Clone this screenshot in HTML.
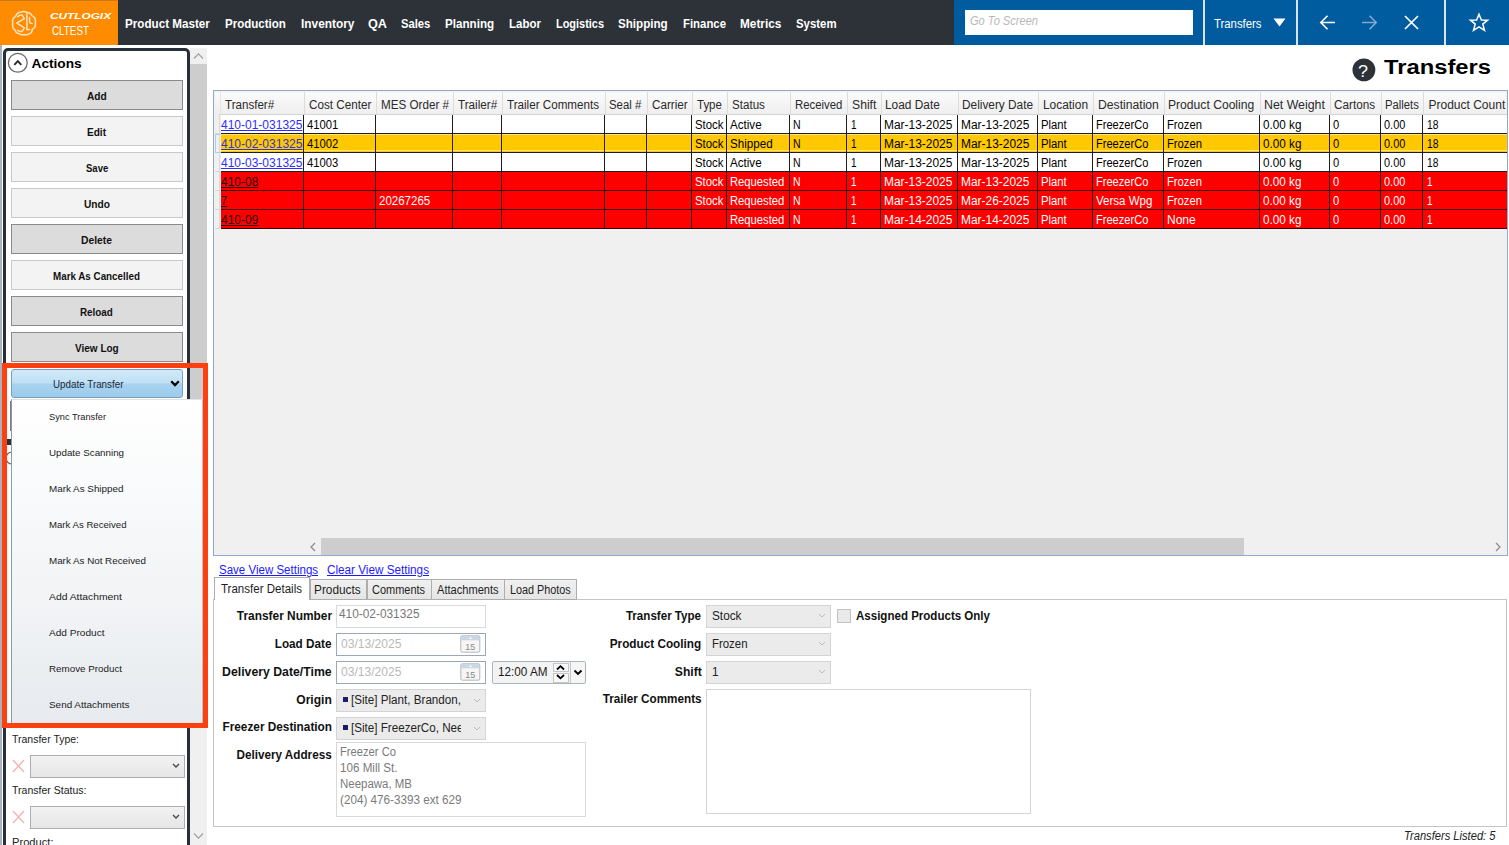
<!DOCTYPE html><html><head><meta charset="utf-8"><title>Transfers</title><style>
*{margin:0;padding:0;box-sizing:border-box}
html,body{width:1509px;height:845px;overflow:hidden;background:#fff;font-family:"Liberation Sans",sans-serif}
.t{position:absolute;white-space:pre;line-height:normal}
.r{position:absolute}
svg{position:absolute;overflow:visible}
</style></head><body>
<div class="r" style="left:0px;top:0px;width:1509px;height:45px;background:#2c3238"></div>
<div class="r" style="left:0px;top:0px;width:118px;height:45px;background:#fe8b00"></div>
<div class="r" style="left:0px;top:0px;width:117px;height:1px;background:#c77a1c"></div>
<div class="r" style="left:954px;top:0px;width:555px;height:45px;background:#005c9f"></div>
<svg style="left:0px;top:0px" width="40" height="40" viewBox="0 0 40 40">
<g fill="none" stroke="#fde2bd" stroke-width="1.5" stroke-linejoin="round" stroke-linecap="round">
<path d="M21.1 12 Q24 10.8 26.9 12.3 Q30.6 12.8 32.2 15.9 Q35.6 17.6 35.4 20.6 L35.4 25.5 Q35.2 28 32.3 29.2 Q32.2 32.5 29.8 33.5 Q27.5 35.4 24.2 34.6 Q21 35.4 18.6 33.4 Q15.6 33 15.4 30.5 Q12.6 28.8 12.6 25.8 L12.6 20.6 Q12.8 17.8 15.5 16.6 Q16.6 12.6 21.1 12 Z"/>
<path d="M17.6 16.8 Q19.5 14.6 22 15 L24.4 18.6 L16.8 23 L24.4 27.8 L22.2 31.4 Q19.6 32 17.6 30.2"/>
<path d="M26.9 13.2 L26.9 29.8 L29.6 29.4"/>
<path d="M29.4 17.4 L29.8 22.8 L32.2 23.6"/>
</g></svg>
<div class="t" style="left:49.5px;top:9.8px;font-size:9.5px;color:#fff;font-weight:bold;font-style:italic;transform:scaleX(1.243);transform-origin:left;">CUTLOGIX</div>
<div class="t" style="left:52.3px;top:24.0px;font-size:12.5px;color:#fff;transform:scaleX(0.787);transform-origin:left;">CLTEST</div>
<div class="t" style="left:124.9px;top:16.8px;font-size:12.5px;color:#fff;font-weight:bold;transform:scaleX(0.932);transform-origin:left;">Product Master</div>
<div class="t" style="left:224.7px;top:16.8px;font-size:12.5px;color:#fff;font-weight:bold;transform:scaleX(0.923);transform-origin:left;">Production</div>
<div class="t" style="left:300.6px;top:16.8px;font-size:12.5px;color:#fff;font-weight:bold;transform:scaleX(0.949);transform-origin:left;">Inventory</div>
<div class="t" style="left:368.3px;top:16.8px;font-size:12.5px;color:#fff;font-weight:bold;transform:scaleX(1.013);transform-origin:left;">QA</div>
<div class="t" style="left:401.4px;top:16.8px;font-size:12.5px;color:#fff;font-weight:bold;transform:scaleX(0.897);transform-origin:left;">Sales</div>
<div class="t" style="left:445.0px;top:16.8px;font-size:12.5px;color:#fff;font-weight:bold;transform:scaleX(0.930);transform-origin:left;">Planning</div>
<div class="t" style="left:508.6px;top:16.8px;font-size:12.5px;color:#fff;font-weight:bold;transform:scaleX(0.919);transform-origin:left;">Labor</div>
<div class="t" style="left:556.0px;top:16.8px;font-size:12.5px;color:#fff;font-weight:bold;transform:scaleX(0.875);transform-origin:left;">Logistics</div>
<div class="t" style="left:618.2px;top:16.8px;font-size:12.5px;color:#fff;font-weight:bold;transform:scaleX(0.930);transform-origin:left;">Shipping</div>
<div class="t" style="left:682.9px;top:16.8px;font-size:12.5px;color:#fff;font-weight:bold;transform:scaleX(0.910);transform-origin:left;">Finance</div>
<div class="t" style="left:740.4px;top:16.8px;font-size:12.5px;color:#fff;font-weight:bold;transform:scaleX(0.944);transform-origin:left;">Metrics</div>
<div class="t" style="left:796.4px;top:16.8px;font-size:12.5px;color:#fff;font-weight:bold;transform:scaleX(0.911);transform-origin:left;">System</div>
<div class="r" style="left:965px;top:10px;width:228px;height:25px;background:#fff"></div>
<div class="t" style="left:969.5px;top:14.0px;font-size:12px;color:#b8b8b8;font-style:italic;transform:scaleX(0.924);transform-origin:left;">Go To Screen</div>
<div class="r" style="left:1203px;top:0px;width:2px;height:45px;background:#d7e4ef"></div>
<div class="r" style="left:1296px;top:0px;width:2px;height:45px;background:#d7e4ef"></div>
<div class="r" style="left:1444px;top:0px;width:2px;height:45px;background:#d7e4ef"></div>
<div class="t" style="left:1213.5px;top:16.0px;font-size:13px;color:#fff;transform:scaleX(0.873);transform-origin:left;">Transfers</div>
<svg style="left:1273px;top:18px" width="13" height="9"><path d="M0.5 0.5 L12.5 0.5 L6.5 8.5 Z" fill="#fff"/></svg>
<svg style="left:1319px;top:14px" width="18" height="17"><path d="M16 8.5 L2 8.5 M8.5 1.8 L1.8 8.5 L8.5 15.2" fill="none" stroke="#fff" stroke-width="1.6"/></svg>
<svg style="left:1361px;top:14px" width="18" height="17"><path d="M1 8.5 L15 8.5 M8.5 1.8 L15.2 8.5 L8.5 15.2" fill="none" stroke="#80a9cf" stroke-width="1.6"/></svg>
<svg style="left:1404px;top:15px" width="15" height="15"><path d="M1 1 L14 14 M14 1 L1 14" fill="none" stroke="#fff" stroke-width="1.7"/></svg>
<svg style="left:1469px;top:13px" width="20" height="19" viewBox="0 0 20 19"><path d="M10 1.2 L12.4 7 L18.6 7.2 L13.8 11.1 L15.5 17.4 L10 13.8 L4.5 17.4 L6.2 11.1 L1.4 7.2 L7.6 7 Z" fill="none" stroke="#fff" stroke-width="1.5" stroke-linejoin="miter"/></svg>
<svg style="left:1352px;top:58px" width="24" height="24"><circle cx="11.9" cy="11.9" r="11.4" fill="#2c3238"/></svg>
<div class="t" style="left:1358.2px;top:61.8px;font-size:17px;color:#fff;transform:scaleX(1.058);transform-origin:left;">?</div>
<div class="t" style="left:1384.3px;top:56.1px;font-size:20px;color:#000;font-weight:bold;transform:scaleX(1.188);transform-origin:left;">Transfers</div>
<div class="r" style="left:213px;top:90px;width:1294.5px;height:466px;background:#f0f0f0;border:1.5px solid #93abcb"></div>
<div class="r" style="left:214.5px;top:91.5px;width:1291px;height:23px;background:linear-gradient(#fbfbfb,#eeeeee)"></div>
<div class="r" style="left:304px;top:91.5px;width:1px;height:23px;background:#dcdcdc"></div>
<div class="r" style="left:376px;top:91.5px;width:1px;height:23px;background:#dcdcdc"></div>
<div class="r" style="left:453px;top:91.5px;width:1px;height:23px;background:#dcdcdc"></div>
<div class="r" style="left:502px;top:91.5px;width:1px;height:23px;background:#dcdcdc"></div>
<div class="r" style="left:605px;top:91.5px;width:1px;height:23px;background:#dcdcdc"></div>
<div class="r" style="left:647px;top:91.5px;width:1px;height:23px;background:#dcdcdc"></div>
<div class="r" style="left:692px;top:91.5px;width:1px;height:23px;background:#dcdcdc"></div>
<div class="r" style="left:727px;top:91.5px;width:1px;height:23px;background:#dcdcdc"></div>
<div class="r" style="left:790px;top:91.5px;width:1px;height:23px;background:#dcdcdc"></div>
<div class="r" style="left:847px;top:91.5px;width:1px;height:23px;background:#dcdcdc"></div>
<div class="r" style="left:881px;top:91.5px;width:1px;height:23px;background:#dcdcdc"></div>
<div class="r" style="left:958px;top:91.5px;width:1px;height:23px;background:#dcdcdc"></div>
<div class="r" style="left:1038px;top:91.5px;width:1px;height:23px;background:#dcdcdc"></div>
<div class="r" style="left:1093px;top:91.5px;width:1px;height:23px;background:#dcdcdc"></div>
<div class="r" style="left:1164px;top:91.5px;width:1px;height:23px;background:#dcdcdc"></div>
<div class="r" style="left:1260px;top:91.5px;width:1px;height:23px;background:#dcdcdc"></div>
<div class="r" style="left:1330px;top:91.5px;width:1px;height:23px;background:#dcdcdc"></div>
<div class="r" style="left:1381px;top:91.5px;width:1px;height:23px;background:#dcdcdc"></div>
<div class="r" style="left:1423px;top:91.5px;width:1px;height:23px;background:#dcdcdc"></div>
<div class="r" style="left:220px;top:91.5px;width:1px;height:23px;background:#e4e4e4"></div>
<div class="t" style="left:225.2px;top:97.8px;font-size:12px;color:#2a2a2a;transform:scaleX(0.966);transform-origin:left;">Transfer#</div>
<div class="t" style="left:308.5px;top:97.8px;font-size:12px;color:#2a2a2a;transform:scaleX(0.973);transform-origin:left;">Cost Center</div>
<div class="t" style="left:380.8px;top:97.8px;font-size:12px;color:#2a2a2a;transform:scaleX(0.971);transform-origin:left;">MES Order #</div>
<div class="t" style="left:458.3px;top:97.8px;font-size:12px;color:#2a2a2a;transform:scaleX(0.974);transform-origin:left;">Trailer#</div>
<div class="t" style="left:507.4px;top:97.8px;font-size:12px;color:#2a2a2a;transform:scaleX(0.970);transform-origin:left;">Trailer Comments</div>
<div class="t" style="left:609.1px;top:97.8px;font-size:12px;color:#2a2a2a;transform:scaleX(0.949);transform-origin:left;">Seal #</div>
<div class="t" style="left:651.5px;top:97.8px;font-size:12px;color:#2a2a2a;transform:scaleX(0.971);transform-origin:left;">Carrier</div>
<div class="t" style="left:697.0px;top:97.8px;font-size:12px;color:#2a2a2a;transform:scaleX(0.957);transform-origin:left;">Type</div>
<div class="t" style="left:731.8px;top:97.8px;font-size:12px;color:#2a2a2a;transform:scaleX(0.967);transform-origin:left;">Status</div>
<div class="t" style="left:794.8px;top:97.8px;font-size:12px;color:#2a2a2a;transform:scaleX(0.945);transform-origin:left;">Received</div>
<div class="t" style="left:851.6px;top:97.8px;font-size:12px;color:#2a2a2a;transform:scaleX(1.016);transform-origin:left;">Shift</div>
<div class="t" style="left:885.3px;top:97.8px;font-size:12px;color:#2a2a2a;transform:scaleX(0.990);transform-origin:left;">Load Date</div>
<div class="t" style="left:962.1px;top:97.8px;font-size:12px;color:#2a2a2a;transform:scaleX(0.986);transform-origin:left;">Delivery Date</div>
<div class="t" style="left:1042.6px;top:97.8px;font-size:12px;color:#2a2a2a;transform:scaleX(0.992);transform-origin:left;">Location</div>
<div class="t" style="left:1097.8px;top:97.8px;font-size:12px;color:#2a2a2a;transform:scaleX(1.014);transform-origin:left;">Destination</div>
<div class="t" style="left:1168.3px;top:97.8px;font-size:12px;color:#2a2a2a;transform:scaleX(1.010);transform-origin:left;">Product Cooling</div>
<div class="t" style="left:1264.1px;top:97.8px;font-size:12px;color:#2a2a2a;transform:scaleX(1.030);transform-origin:left;">Net Weight</div>
<div class="t" style="left:1334.3px;top:97.8px;font-size:12px;color:#2a2a2a;transform:scaleX(0.978);transform-origin:left;">Cartons</div>
<div class="t" style="left:1385.0px;top:97.8px;font-size:12px;color:#2a2a2a;transform:scaleX(0.941);transform-origin:left;">Pallets</div>
<div class="t" style="left:1428.5px;top:97.8px;font-size:12px;color:#2a2a2a;">Product Count</div>
<div class="r" style="left:220.5px;top:114px;width:1286px;height:19px;background:#ffffff"></div>
<div class="t" style="left:221.0px;top:118.3px;font-size:12px;color:#2d2dff;text-decoration:underline;">410-01-031325</div>
<div class="t" style="left:307.0px;top:118.3px;font-size:12px;color:#000000;transform:scaleX(0.938);transform-origin:left;">41001</div>
<div class="t" style="left:695.0px;top:118.3px;font-size:12px;color:#000000;transform:scaleX(0.946);transform-origin:left;">Stock</div>
<div class="t" style="left:730.0px;top:118.3px;font-size:12px;color:#000000;transform:scaleX(0.967);transform-origin:left;">Active</div>
<div class="t" style="left:793.0px;top:118.3px;font-size:12px;color:#000000;transform:scaleX(0.877);transform-origin:left;">N</div>
<div class="t" style="left:851.2px;top:118.3px;font-size:12px;color:#000000;transform:scaleX(0.825);transform-origin:left;">1</div>
<div class="t" style="left:884.0px;top:118.3px;font-size:12px;color:#000000;transform:scaleX(0.994);transform-origin:left;">Mar-13-2025</div>
<div class="t" style="left:961.0px;top:118.3px;font-size:12px;color:#000000;transform:scaleX(0.994);transform-origin:left;">Mar-13-2025</div>
<div class="t" style="left:1041.0px;top:118.3px;font-size:12px;color:#000000;transform:scaleX(0.940);transform-origin:left;">Plant</div>
<div class="t" style="left:1096.0px;top:118.3px;font-size:12px;color:#000000;transform:scaleX(0.923);transform-origin:left;">FreezerCo</div>
<div class="t" style="left:1167.0px;top:118.3px;font-size:12px;color:#000000;transform:scaleX(0.937);transform-origin:left;">Frozen</div>
<div class="t" style="left:1263.0px;top:118.3px;font-size:12px;color:#000000;transform:scaleX(0.976);transform-origin:left;">0.00 kg</div>
<div class="t" style="left:1333.0px;top:118.3px;font-size:12px;color:#000000;transform:scaleX(0.930);transform-origin:left;">0</div>
<div class="t" style="left:1384.0px;top:118.3px;font-size:12px;color:#000000;transform:scaleX(0.912);transform-origin:left;">0.00</div>
<div class="t" style="left:1427.2px;top:118.3px;font-size:12px;color:#000000;transform:scaleX(0.854);transform-origin:left;">18</div>
<div class="r" style="left:220.5px;top:133px;width:1286px;height:19px;background:#ffc800"></div>
<div class="r" style="left:220.5px;top:134px;width:1286px;height:17px;border-top:1px solid #ffe38a;border-bottom:1px solid #ffe38a"></div>
<div class="t" style="left:221.0px;top:137.3px;font-size:12px;color:#3434c8;text-decoration:underline;">410-02-031325</div>
<div class="t" style="left:307.0px;top:137.3px;font-size:12px;color:#000000;transform:scaleX(0.938);transform-origin:left;">41002</div>
<div class="t" style="left:695.0px;top:137.3px;font-size:12px;color:#000000;transform:scaleX(0.946);transform-origin:left;">Stock</div>
<div class="t" style="left:730.0px;top:137.3px;font-size:12px;color:#000000;transform:scaleX(0.967);transform-origin:left;">Shipped</div>
<div class="t" style="left:793.0px;top:137.3px;font-size:12px;color:#000000;transform:scaleX(0.877);transform-origin:left;">N</div>
<div class="t" style="left:851.2px;top:137.3px;font-size:12px;color:#000000;transform:scaleX(0.825);transform-origin:left;">1</div>
<div class="t" style="left:884.0px;top:137.3px;font-size:12px;color:#000000;transform:scaleX(0.994);transform-origin:left;">Mar-13-2025</div>
<div class="t" style="left:961.0px;top:137.3px;font-size:12px;color:#000000;transform:scaleX(0.994);transform-origin:left;">Mar-13-2025</div>
<div class="t" style="left:1041.0px;top:137.3px;font-size:12px;color:#000000;transform:scaleX(0.940);transform-origin:left;">Plant</div>
<div class="t" style="left:1096.0px;top:137.3px;font-size:12px;color:#000000;transform:scaleX(0.923);transform-origin:left;">FreezerCo</div>
<div class="t" style="left:1167.0px;top:137.3px;font-size:12px;color:#000000;transform:scaleX(0.937);transform-origin:left;">Frozen</div>
<div class="t" style="left:1263.0px;top:137.3px;font-size:12px;color:#000000;transform:scaleX(0.976);transform-origin:left;">0.00 kg</div>
<div class="t" style="left:1333.0px;top:137.3px;font-size:12px;color:#000000;transform:scaleX(0.930);transform-origin:left;">0</div>
<div class="t" style="left:1384.0px;top:137.3px;font-size:12px;color:#000000;transform:scaleX(0.912);transform-origin:left;">0.00</div>
<div class="t" style="left:1427.2px;top:137.3px;font-size:12px;color:#000000;transform:scaleX(0.854);transform-origin:left;">18</div>
<div class="r" style="left:220.5px;top:152px;width:1286px;height:19px;background:#ffffff"></div>
<div class="t" style="left:221.0px;top:156.3px;font-size:12px;color:#2d2dff;text-decoration:underline;">410-03-031325</div>
<div class="t" style="left:307.0px;top:156.3px;font-size:12px;color:#000000;transform:scaleX(0.938);transform-origin:left;">41003</div>
<div class="t" style="left:695.0px;top:156.3px;font-size:12px;color:#000000;transform:scaleX(0.946);transform-origin:left;">Stock</div>
<div class="t" style="left:730.0px;top:156.3px;font-size:12px;color:#000000;transform:scaleX(0.967);transform-origin:left;">Active</div>
<div class="t" style="left:793.0px;top:156.3px;font-size:12px;color:#000000;transform:scaleX(0.877);transform-origin:left;">N</div>
<div class="t" style="left:851.2px;top:156.3px;font-size:12px;color:#000000;transform:scaleX(0.825);transform-origin:left;">1</div>
<div class="t" style="left:884.0px;top:156.3px;font-size:12px;color:#000000;transform:scaleX(0.994);transform-origin:left;">Mar-13-2025</div>
<div class="t" style="left:961.0px;top:156.3px;font-size:12px;color:#000000;transform:scaleX(0.994);transform-origin:left;">Mar-13-2025</div>
<div class="t" style="left:1041.0px;top:156.3px;font-size:12px;color:#000000;transform:scaleX(0.940);transform-origin:left;">Plant</div>
<div class="t" style="left:1096.0px;top:156.3px;font-size:12px;color:#000000;transform:scaleX(0.923);transform-origin:left;">FreezerCo</div>
<div class="t" style="left:1167.0px;top:156.3px;font-size:12px;color:#000000;transform:scaleX(0.937);transform-origin:left;">Frozen</div>
<div class="t" style="left:1263.0px;top:156.3px;font-size:12px;color:#000000;transform:scaleX(0.976);transform-origin:left;">0.00 kg</div>
<div class="t" style="left:1333.0px;top:156.3px;font-size:12px;color:#000000;transform:scaleX(0.930);transform-origin:left;">0</div>
<div class="t" style="left:1384.0px;top:156.3px;font-size:12px;color:#000000;transform:scaleX(0.912);transform-origin:left;">0.00</div>
<div class="t" style="left:1427.2px;top:156.3px;font-size:12px;color:#000000;transform:scaleX(0.854);transform-origin:left;">18</div>
<div class="r" style="left:220.5px;top:171px;width:1286px;height:19px;background:#ff0000"></div>
<div class="t" style="left:221.0px;top:175.3px;font-size:12px;color:#2a0000;text-decoration:underline;">410-08</div>
<div class="t" style="left:695.0px;top:175.3px;font-size:12px;color:#ffffff;transform:scaleX(0.946);transform-origin:left;">Stock</div>
<div class="t" style="left:730.0px;top:175.3px;font-size:12px;color:#ffffff;transform:scaleX(0.936);transform-origin:left;">Requested</div>
<div class="t" style="left:793.0px;top:175.3px;font-size:12px;color:#ffffff;transform:scaleX(0.877);transform-origin:left;">N</div>
<div class="t" style="left:851.2px;top:175.3px;font-size:12px;color:#ffffff;transform:scaleX(0.825);transform-origin:left;">1</div>
<div class="t" style="left:884.0px;top:175.3px;font-size:12px;color:#ffffff;transform:scaleX(0.994);transform-origin:left;">Mar-13-2025</div>
<div class="t" style="left:961.0px;top:175.3px;font-size:12px;color:#ffffff;transform:scaleX(0.994);transform-origin:left;">Mar-13-2025</div>
<div class="t" style="left:1041.0px;top:175.3px;font-size:12px;color:#ffffff;transform:scaleX(0.940);transform-origin:left;">Plant</div>
<div class="t" style="left:1096.0px;top:175.3px;font-size:12px;color:#ffffff;transform:scaleX(0.923);transform-origin:left;">FreezerCo</div>
<div class="t" style="left:1167.0px;top:175.3px;font-size:12px;color:#ffffff;transform:scaleX(0.937);transform-origin:left;">Frozen</div>
<div class="t" style="left:1263.0px;top:175.3px;font-size:12px;color:#ffffff;transform:scaleX(0.976);transform-origin:left;">0.00 kg</div>
<div class="t" style="left:1333.0px;top:175.3px;font-size:12px;color:#ffffff;transform:scaleX(0.930);transform-origin:left;">0</div>
<div class="t" style="left:1384.0px;top:175.3px;font-size:12px;color:#ffffff;transform:scaleX(0.912);transform-origin:left;">0.00</div>
<div class="t" style="left:1427.2px;top:175.3px;font-size:12px;color:#ffffff;transform:scaleX(0.825);transform-origin:left;">1</div>
<div class="r" style="left:220.5px;top:190px;width:1286px;height:19px;background:#ff0000"></div>
<div class="t" style="left:221.0px;top:194.3px;font-size:12px;color:#2a0000;text-decoration:underline;transform:scaleX(0.900);transform-origin:left;">7</div>
<div class="t" style="left:379.0px;top:194.3px;font-size:12px;color:#ffffff;transform:scaleX(0.959);transform-origin:left;">20267265</div>
<div class="t" style="left:695.0px;top:194.3px;font-size:12px;color:#ffffff;transform:scaleX(0.946);transform-origin:left;">Stock</div>
<div class="t" style="left:730.0px;top:194.3px;font-size:12px;color:#ffffff;transform:scaleX(0.936);transform-origin:left;">Requested</div>
<div class="t" style="left:793.0px;top:194.3px;font-size:12px;color:#ffffff;transform:scaleX(0.877);transform-origin:left;">N</div>
<div class="t" style="left:851.2px;top:194.3px;font-size:12px;color:#ffffff;transform:scaleX(0.825);transform-origin:left;">1</div>
<div class="t" style="left:884.0px;top:194.3px;font-size:12px;color:#ffffff;transform:scaleX(0.994);transform-origin:left;">Mar-13-2025</div>
<div class="t" style="left:961.0px;top:194.3px;font-size:12px;color:#ffffff;transform:scaleX(0.994);transform-origin:left;">Mar-26-2025</div>
<div class="t" style="left:1041.0px;top:194.3px;font-size:12px;color:#ffffff;transform:scaleX(0.940);transform-origin:left;">Plant</div>
<div class="t" style="left:1096.0px;top:194.3px;font-size:12px;color:#ffffff;transform:scaleX(0.961);transform-origin:left;">Versa Wpg</div>
<div class="t" style="left:1167.0px;top:194.3px;font-size:12px;color:#ffffff;transform:scaleX(0.937);transform-origin:left;">Frozen</div>
<div class="t" style="left:1263.0px;top:194.3px;font-size:12px;color:#ffffff;transform:scaleX(0.976);transform-origin:left;">0.00 kg</div>
<div class="t" style="left:1333.0px;top:194.3px;font-size:12px;color:#ffffff;transform:scaleX(0.930);transform-origin:left;">0</div>
<div class="t" style="left:1384.0px;top:194.3px;font-size:12px;color:#ffffff;transform:scaleX(0.912);transform-origin:left;">0.00</div>
<div class="t" style="left:1427.2px;top:194.3px;font-size:12px;color:#ffffff;transform:scaleX(0.825);transform-origin:left;">1</div>
<div class="r" style="left:220.5px;top:209px;width:1286px;height:19px;background:#ff0000"></div>
<div class="t" style="left:221.0px;top:213.3px;font-size:12px;color:#2a0000;text-decoration:underline;">410-09</div>
<div class="t" style="left:730.0px;top:213.3px;font-size:12px;color:#ffffff;transform:scaleX(0.936);transform-origin:left;">Requested</div>
<div class="t" style="left:793.0px;top:213.3px;font-size:12px;color:#ffffff;transform:scaleX(0.877);transform-origin:left;">N</div>
<div class="t" style="left:851.2px;top:213.3px;font-size:12px;color:#ffffff;transform:scaleX(0.825);transform-origin:left;">1</div>
<div class="t" style="left:884.0px;top:213.3px;font-size:12px;color:#ffffff;transform:scaleX(0.994);transform-origin:left;">Mar-14-2025</div>
<div class="t" style="left:961.0px;top:213.3px;font-size:12px;color:#ffffff;transform:scaleX(0.994);transform-origin:left;">Mar-14-2025</div>
<div class="t" style="left:1041.0px;top:213.3px;font-size:12px;color:#ffffff;transform:scaleX(0.940);transform-origin:left;">Plant</div>
<div class="t" style="left:1096.0px;top:213.3px;font-size:12px;color:#ffffff;transform:scaleX(0.923);transform-origin:left;">FreezerCo</div>
<div class="t" style="left:1167.0px;top:213.3px;font-size:12px;color:#ffffff;">None</div>
<div class="t" style="left:1263.0px;top:213.3px;font-size:12px;color:#ffffff;transform:scaleX(0.976);transform-origin:left;">0.00 kg</div>
<div class="t" style="left:1333.0px;top:213.3px;font-size:12px;color:#ffffff;transform:scaleX(0.930);transform-origin:left;">0</div>
<div class="t" style="left:1384.0px;top:213.3px;font-size:12px;color:#ffffff;transform:scaleX(0.912);transform-origin:left;">0.00</div>
<div class="t" style="left:1427.2px;top:213.3px;font-size:12px;color:#ffffff;transform:scaleX(0.825);transform-origin:left;">1</div>
<div class="r" style="left:220.5px;top:132.5px;width:1286px;height:1px;background:#1e1e1e"></div>
<div class="r" style="left:220.5px;top:151.5px;width:1286px;height:1px;background:#1e1e1e"></div>
<div class="r" style="left:220.5px;top:170.5px;width:1286px;height:1px;background:#1e1e1e"></div>
<div class="r" style="left:220.5px;top:189.5px;width:1286px;height:1px;background:#3a0000"></div>
<div class="r" style="left:220.5px;top:208.5px;width:1286px;height:1px;background:#3a0000"></div>
<div class="r" style="left:220.5px;top:227.5px;width:1286px;height:1px;background:#3a0000"></div>
<div class="r" style="left:303px;top:114px;width:1px;height:115px;background:#1e1e1e"></div>
<div class="r" style="left:375px;top:114px;width:1px;height:115px;background:#1e1e1e"></div>
<div class="r" style="left:452px;top:114px;width:1px;height:115px;background:#1e1e1e"></div>
<div class="r" style="left:501px;top:114px;width:1px;height:115px;background:#1e1e1e"></div>
<div class="r" style="left:604px;top:114px;width:1px;height:115px;background:#1e1e1e"></div>
<div class="r" style="left:646px;top:114px;width:1px;height:115px;background:#1e1e1e"></div>
<div class="r" style="left:691px;top:114px;width:1px;height:115px;background:#1e1e1e"></div>
<div class="r" style="left:726px;top:114px;width:1px;height:115px;background:#1e1e1e"></div>
<div class="r" style="left:789px;top:114px;width:1px;height:115px;background:#1e1e1e"></div>
<div class="r" style="left:846px;top:114px;width:1px;height:115px;background:#1e1e1e"></div>
<div class="r" style="left:880px;top:114px;width:1px;height:115px;background:#1e1e1e"></div>
<div class="r" style="left:957px;top:114px;width:1px;height:115px;background:#1e1e1e"></div>
<div class="r" style="left:1037px;top:114px;width:1px;height:115px;background:#1e1e1e"></div>
<div class="r" style="left:1092px;top:114px;width:1px;height:115px;background:#1e1e1e"></div>
<div class="r" style="left:1163px;top:114px;width:1px;height:115px;background:#1e1e1e"></div>
<div class="r" style="left:1259px;top:114px;width:1px;height:115px;background:#1e1e1e"></div>
<div class="r" style="left:1329px;top:114px;width:1px;height:115px;background:#1e1e1e"></div>
<div class="r" style="left:1380px;top:114px;width:1px;height:115px;background:#1e1e1e"></div>
<div class="r" style="left:1422px;top:114px;width:1px;height:115px;background:#1e1e1e"></div>
<div class="r" style="left:219px;top:114px;width:1px;height:115px;background:#dadada"></div>
<div class="r" style="left:220.5px;top:114px;width:1286px;height:1px;background:#d4d4d4"></div>
<div class="r" style="left:214.5px;top:132.5px;width:5px;height:1px;background:#d6d6d6"></div>
<div class="r" style="left:214.5px;top:151.5px;width:5px;height:1px;background:#d6d6d6"></div>
<div class="r" style="left:214.5px;top:170.5px;width:5px;height:1px;background:#d6d6d6"></div>
<div class="r" style="left:214.5px;top:189.5px;width:5px;height:1px;background:#d6d6d6"></div>
<div class="r" style="left:214.5px;top:208.5px;width:5px;height:1px;background:#d6d6d6"></div>
<div class="r" style="left:214.5px;top:227.5px;width:5px;height:1px;background:#d6d6d6"></div>
<div class="r" style="left:214.5px;top:133.5px;width:6px;height:19px;border:1px solid #a8d0f0;border-right:none"></div>
<div class="r" style="left:321px;top:538px;width:923px;height:17px;background:#cdcdcd"></div>
<svg style="left:309px;top:542px" width="8" height="10"><path d="M6 1 L2 5 L6 9" fill="none" stroke="#8a8a8a" stroke-width="1.2"/></svg>
<svg style="left:1494px;top:542px" width="8" height="10"><path d="M2 1 L6 5 L2 9" fill="none" stroke="#8a8a8a" stroke-width="1.2"/></svg>
<div class="t" style="left:218.5px;top:563.1px;font-size:12px;color:#1a1aff;text-decoration:underline;transform:scaleX(0.960);transform-origin:left;">Save View Settings</div>
<div class="t" style="left:327.0px;top:563.1px;font-size:12px;color:#1a1aff;text-decoration:underline;transform:scaleX(0.976);transform-origin:left;">Clear View Settings</div>
<div class="r" style="left:213px;top:598.5px;width:1294px;height:228px;border:1.5px solid #c4c4c4;background:#fff"></div>
<div class="r" style="left:309.5px;top:579px;width:57.5px;height:21px;background:linear-gradient(#f0f0f0,#e5e5e5);border:1px solid #adadad"></div>
<div class="t" style="left:313.8px;top:582.9px;font-size:12px;color:#1e1e1e;transform:scaleX(0.986);transform-origin:left;">Products</div>
<div class="r" style="left:366.5px;top:579px;width:65.5px;height:21px;background:linear-gradient(#f0f0f0,#e5e5e5);border:1px solid #adadad"></div>
<div class="t" style="left:372.1px;top:582.9px;font-size:12px;color:#1e1e1e;transform:scaleX(0.915);transform-origin:left;">Comments</div>
<div class="r" style="left:431px;top:579px;width:74px;height:21px;background:linear-gradient(#f0f0f0,#e5e5e5);border:1px solid #adadad"></div>
<div class="t" style="left:436.7px;top:582.9px;font-size:12px;color:#1e1e1e;transform:scaleX(0.924);transform-origin:left;">Attachments</div>
<div class="r" style="left:504px;top:579px;width:73px;height:21px;background:linear-gradient(#f0f0f0,#e5e5e5);border:1px solid #adadad"></div>
<div class="t" style="left:509.8px;top:582.9px;font-size:12px;color:#1e1e1e;transform:scaleX(0.901);transform-origin:left;">Load Photos</div>
<div class="r" style="left:213.5px;top:576.5px;width:96.5px;height:23px;background:#fff;border:1px solid #adadad;border-bottom:none"></div>
<div class="t" style="left:221.1px;top:581.5px;font-size:12px;color:#1e1e1e;transform:scaleX(0.961);transform-origin:left;">Transfer Details</div>
<div class="t" style="left:231.5px;top:608.8px;font-size:12.5px;color:#111;font-weight:bold;transform:scaleX(0.952);transform-origin:right;">Transfer Number</div>
<div class="t" style="left:271.1px;top:637.2px;font-size:12.5px;color:#111;font-weight:bold;transform:scaleX(0.938);transform-origin:right;">Load Date</div>
<div class="t" style="left:219.9px;top:665.0px;font-size:12.5px;color:#111;font-weight:bold;transform:scaleX(0.981);transform-origin:right;">Delivery Date/Time</div>
<div class="t" style="left:294.7px;top:693.1px;font-size:12.5px;color:#111;font-weight:bold;transform:scaleX(0.965);transform-origin:right;">Origin</div>
<div class="t" style="left:215.5px;top:720.3px;font-size:12.5px;color:#111;font-weight:bold;transform:scaleX(0.944);transform-origin:right;">Freezer Destination</div>
<div class="t" style="left:229.8px;top:748.2px;font-size:12.5px;color:#111;font-weight:bold;transform:scaleX(0.936);transform-origin:right;">Delivery Address</div>
<div class="r" style="left:336px;top:605px;width:150px;height:23px;border:1px solid #d9d9d9;background:#fff"></div>
<div class="t" style="left:338.8px;top:606.9px;font-size:12px;color:#777;transform:scaleX(0.989);transform-origin:left;">410-02-031325</div>
<div class="r" style="left:336px;top:632.5px;width:150px;height:23px;border:1px solid #9aa8b7;background:#fff"></div>
<div class="t" style="left:341.0px;top:636.9px;font-size:12px;color:#b9b9b9;transform:scaleX(1.007);transform-origin:left;">03/13/2025</div>
<svg style="left:459.5px;top:635.0px" width="21" height="18"><rect x="0.8" y="0.8" width="19" height="16.4" rx="1.5" fill="#f6f6f6" stroke="#b5b5b5" stroke-width="1"/><rect x="1.3" y="1.3" width="18" height="4" fill="#c8d6e6"/><circle cx="10.5" cy="3.3" r="1" fill="#fff"/><text x="10.3" y="15" font-family="Liberation Sans" font-size="9" fill="#8a8a8a" text-anchor="middle">15</text></svg>
<div class="r" style="left:336px;top:660.5px;width:150px;height:23px;border:1px solid #9aa8b7;background:#fff"></div>
<div class="t" style="left:341.0px;top:664.9px;font-size:12px;color:#b9b9b9;transform:scaleX(1.007);transform-origin:left;">03/13/2025</div>
<svg style="left:459.5px;top:663.0px" width="21" height="18"><rect x="0.8" y="0.8" width="19" height="16.4" rx="1.5" fill="#f6f6f6" stroke="#b5b5b5" stroke-width="1"/><rect x="1.3" y="1.3" width="18" height="4" fill="#c8d6e6"/><circle cx="10.5" cy="3.3" r="1" fill="#fff"/><text x="10.3" y="15" font-family="Liberation Sans" font-size="9" fill="#8a8a8a" text-anchor="middle">15</text></svg>
<div class="r" style="left:491.5px;top:660.5px;width:94.5px;height:23px;border:1px solid #a9b4bf;border-radius:2px;background:#f3f3f3"></div>
<div class="t" style="left:497.5px;top:665.2px;font-size:12.5px;color:#1a1a1a;transform:scaleX(0.937);transform-origin:left;">12:00 AM</div>
<div class="r" style="left:552.5px;top:662.5px;width:16.5px;height:9px;border:1px solid #c6c6c6;background:#f8f8f8"></div>
<div class="r" style="left:552.5px;top:673px;width:16.5px;height:9.5px;border:1px solid #c6c6c6;background:#f8f8f8"></div>
<svg style="left:555px;top:663px" width="11" height="18"><path d="M2 6.5 L5.5 3.2 L9 6.5" fill="none" stroke="#000" stroke-width="1.8"/><path d="M2 12 L5.5 15.3 L9 12" fill="none" stroke="#000" stroke-width="1.8"/></svg>
<div class="r" style="left:569.5px;top:661.5px;width:15.5px;height:21px;border-left:1px solid #c6c6c6;background:#f6f6f6;border-radius:0 2px 2px 0"></div>
<svg style="left:572.5px;top:669px" width="10" height="7"><path d="M1.5 1.5 L5 5 L8.5 1.5" fill="none" stroke="#000" stroke-width="1.9"/></svg>
<div class="r" style="left:336px;top:689px;width:150px;height:22.5px;border:1px solid #d4d4d4;background:#ebebeb;overflow:hidden"></div>
<div class="r" style="left:342.5px;top:696.5px;width:5.5px;height:5.5px;background:#1c1c6e"></div>
<div class="r" style="left:350px;top:689px;width:111px;height:22px;overflow:hidden"><div class="t" style="left:1.2px;top:3.5px;font-size:12.5px;color:#222;transform:scaleX(0.931);transform-origin:left;">[Site] Plant, Brandon,</div>
</div>
<svg style="left:473px;top:697.5px" width="8" height="6"><path d="M1 1 L4 4 L7 1" fill="none" stroke="#b9b9b9" stroke-width="1"/></svg>
<div class="r" style="left:336px;top:717px;width:150px;height:22.5px;border:1px solid #d4d4d4;background:#ebebeb;overflow:hidden"></div>
<div class="r" style="left:342.5px;top:724.5px;width:5.5px;height:5.5px;background:#1c1c6e"></div>
<div class="r" style="left:350px;top:717px;width:111px;height:22px;overflow:hidden"><div class="t" style="left:1.2px;top:3.5px;font-size:12.5px;color:#222;transform:scaleX(0.931);transform-origin:left;">[Site] FreezerCo, Neepawa, MB</div>
</div>
<svg style="left:473px;top:725.5px" width="8" height="6"><path d="M1 1 L4 4 L7 1" fill="none" stroke="#b9b9b9" stroke-width="1"/></svg>
<div class="r" style="left:336px;top:741.5px;width:250px;height:75px;border:1px solid #d9d9d9;background:#fff"></div>
<div class="t" style="left:339.5px;top:744.8px;font-size:12px;color:#7a7a7a;transform:scaleX(0.933);transform-origin:left;">Freezer Co</div>
<div class="t" style="left:339.5px;top:760.8px;font-size:12px;color:#7a7a7a;transform:scaleX(0.969);transform-origin:left;">106 Mill St.</div>
<div class="t" style="left:339.5px;top:776.8px;font-size:12px;color:#7a7a7a;transform:scaleX(0.955);transform-origin:left;">Neepawa, MB</div>
<div class="t" style="left:339.5px;top:792.8px;font-size:12px;color:#7a7a7a;transform:scaleX(0.974);transform-origin:left;">(204) 476-3393 ext 629</div>
<div class="t" style="left:620.3px;top:608.8px;font-size:12.5px;color:#111;font-weight:bold;transform:scaleX(0.927);transform-origin:right;">Transfer Type</div>
<div class="t" style="left:604.1px;top:637.0px;font-size:12.5px;color:#111;font-weight:bold;transform:scaleX(0.941);transform-origin:right;">Product Cooling</div>
<div class="t" style="left:673.5px;top:664.5px;font-size:12.5px;color:#111;font-weight:bold;transform:scaleX(0.969);transform-origin:right;">Shift</div>
<div class="t" style="left:595.7px;top:692.3px;font-size:12.5px;color:#111;font-weight:bold;transform:scaleX(0.937);transform-origin:right;">Trailer Comments</div>
<div class="r" style="left:706px;top:605px;width:125px;height:23px;border:1px solid #d4d4d4;background:#ebebeb"></div>
<div class="t" style="left:711.8px;top:608.5px;font-size:12.5px;color:#222;transform:scaleX(0.944);transform-origin:left;">Stock</div>
<svg style="left:817.5px;top:613px" width="8" height="6"><path d="M1 1 L4 4 L7 1" fill="none" stroke="#b9b9b9" stroke-width="1"/></svg>
<div class="r" style="left:706px;top:633px;width:125px;height:23px;border:1px solid #d4d4d4;background:#ebebeb"></div>
<div class="t" style="left:711.8px;top:636.5px;font-size:12.5px;color:#222;transform:scaleX(0.913);transform-origin:left;">Frozen</div>
<svg style="left:817.5px;top:641px" width="8" height="6"><path d="M1 1 L4 4 L7 1" fill="none" stroke="#b9b9b9" stroke-width="1"/></svg>
<div class="r" style="left:706px;top:661px;width:125px;height:23px;border:1px solid #d4d4d4;background:#ebebeb"></div>
<div class="t" style="left:711.8px;top:664.5px;font-size:12.5px;color:#222;transform:scaleX(0.935);transform-origin:left;">1</div>
<svg style="left:817.5px;top:669px" width="8" height="6"><path d="M1 1 L4 4 L7 1" fill="none" stroke="#b9b9b9" stroke-width="1"/></svg>
<div class="r" style="left:837px;top:608.5px;width:14px;height:14px;border:1px solid #c3c3c3;background:#e9e9e9"></div>
<div class="t" style="left:856.0px;top:608.5px;font-size:12.5px;color:#111;font-weight:bold;transform:scaleX(0.923);transform-origin:left;">Assigned Products Only</div>
<div class="r" style="left:706px;top:689px;width:325px;height:124.5px;border:1px solid #d4d4d4;background:#fff"></div>
<div class="t" style="left:1404.0px;top:829.1px;font-size:12px;color:#222;font-style:italic;transform:scaleX(0.929);transform-origin:left;">Transfers Listed: 5</div>
<div class="r" style="left:0px;top:45px;width:2px;height:800px;background:#a9b3bb"></div>
<div class="r" style="left:190px;top:48px;width:17px;height:797px;background:#f0f0f0"></div>
<div class="r" style="left:190px;top:64px;width:17px;height:640px;background:#cdcdcd"></div>
<svg style="left:193px;top:52px" width="11" height="8"><path d="M1 6.5 L5.5 1.8 L10 6.5" fill="none" stroke="#a0a0a0" stroke-width="1.2"/></svg>
<svg style="left:193px;top:832px" width="11" height="8"><path d="M1 1.5 L5.5 6.2 L10 1.5" fill="none" stroke="#a0a0a0" stroke-width="1.2"/></svg>
<div class="r" style="left:3px;top:47.5px;width:187px;height:820px;border:3px solid #27303a;border-radius:5px;background:#fff"></div>
<svg style="left:7px;top:52px" width="22" height="22"><circle cx="10.8" cy="10.8" r="9.4" fill="none" stroke="#6b6b6b" stroke-width="1.3"/><path d="M7.3 12.8 L10.8 9.2 L14.3 12.8" fill="none" stroke="#2a2a2a" stroke-width="1.9"/></svg>
<div class="t" style="left:31.5px;top:55.9px;font-size:13.7px;color:#000;font-weight:bold;">Actions</div>
<div class="r" style="left:10.5px;top:80px;width:172px;height:30px;background:#dcdcdc;border:1.5px solid #8a8a8a"></div>
<div class="t" style="left:86.5px;top:90.1px;font-size:10.5px;color:#111;font-weight:bold;transform:scaleX(0.965);transform-origin:left;">Add</div>
<div class="r" style="left:10.5px;top:116px;width:172px;height:30px;background:#f3f3f3;border:1.5px solid #c9c9c9"></div>
<div class="t" style="left:86.8px;top:126.1px;font-size:10.5px;color:#111;font-weight:bold;transform:scaleX(0.958);transform-origin:left;">Edit</div>
<div class="r" style="left:10.5px;top:152px;width:172px;height:30px;background:#f3f3f3;border:1.5px solid #c9c9c9"></div>
<div class="t" style="left:85.5px;top:162.1px;font-size:10.5px;color:#111;font-weight:bold;transform:scaleX(0.909);transform-origin:left;">Save</div>
<div class="r" style="left:10.5px;top:188px;width:172px;height:30px;background:#f3f3f3;border:1.5px solid #c9c9c9"></div>
<div class="t" style="left:83.5px;top:198.1px;font-size:10.5px;color:#111;font-weight:bold;transform:scaleX(0.969);transform-origin:left;">Undo</div>
<div class="r" style="left:10.5px;top:224px;width:172px;height:30px;background:#dcdcdc;border:1.5px solid #8a8a8a"></div>
<div class="t" style="left:81.0px;top:234.1px;font-size:10.5px;color:#111;font-weight:bold;transform:scaleX(0.984);transform-origin:left;">Delete</div>
<div class="r" style="left:10.5px;top:260px;width:172px;height:30px;background:#f3f3f3;border:1.5px solid #c9c9c9"></div>
<div class="t" style="left:52.9px;top:270.1px;font-size:10.5px;color:#111;font-weight:bold;transform:scaleX(0.935);transform-origin:left;">Mark As Cancelled</div>
<div class="r" style="left:10.5px;top:296px;width:172px;height:30px;background:#dcdcdc;border:1.5px solid #8a8a8a"></div>
<div class="t" style="left:80.2px;top:306.1px;font-size:10.5px;color:#111;font-weight:bold;transform:scaleX(0.937);transform-origin:left;">Reload</div>
<div class="r" style="left:10.5px;top:332px;width:172px;height:30px;background:#dcdcdc;border:1.5px solid #8a8a8a"></div>
<div class="t" style="left:74.5px;top:342.1px;font-size:10.5px;color:#111;font-weight:bold;transform:scaleX(0.952);transform-origin:left;">View Log</div>
<div class="t" style="left:12.0px;top:733.4px;font-size:11.5px;color:#222;transform:scaleX(0.912);transform-origin:left;">Transfer Type:</div>
<div class="t" style="left:12.0px;top:784.1px;font-size:11.5px;color:#222;transform:scaleX(0.915);transform-origin:left;">Transfer Status:</div>
<div class="t" style="left:12.0px;top:836.1px;font-size:11.5px;color:#222;transform:scaleX(0.969);transform-origin:left;">Product:</div>
<div class="r" style="left:29.5px;top:754.5px;width:155.5px;height:23px;background:linear-gradient(#f2f2f2,#e6e6e6);border:1px solid #adadad"></div>
<svg style="left:172px;top:763.0px" width="8" height="6"><path d="M1 1 L4 4 L7 1" fill="none" stroke="#444" stroke-width="1.3"/></svg>
<svg style="left:12px;top:758.5px" width="13" height="14"><path d="M1 1 L12 13 M12 1 L1 13" fill="none" stroke="#f5b3b3" stroke-width="1.4"/></svg>
<div class="r" style="left:29.5px;top:805.5px;width:155.5px;height:23px;background:linear-gradient(#f2f2f2,#e6e6e6);border:1px solid #adadad"></div>
<svg style="left:172px;top:814.0px" width="8" height="6"><path d="M1 1 L4 4 L7 1" fill="none" stroke="#444" stroke-width="1.3"/></svg>
<svg style="left:12px;top:809.5px" width="13" height="14"><path d="M1 1 L12 13 M12 1 L1 13" fill="none" stroke="#f5b3b3" stroke-width="1.4"/></svg>
<div class="r" style="left:7px;top:439px;width:4px;height:6px;background:#27303a"></div>
<svg style="left:8px;top:451px" width="5" height="14"><path d="M4 1 A6 6 0 0 0 4 13" fill="none" stroke="#666" stroke-width="1.2"/></svg>
<div class="r" style="left:10px;top:401px;width:2px;height:30px;background:#7a7a7a"></div>
<div class="r" style="left:10.5px;top:368.5px;width:172px;height:29px;border:1px solid #7a9dc0;border-radius:3px;background:linear-gradient(#d2eaf9 0%,#bfe0f5 48%,#a9d3ef 52%,#9ccbec 100%)"></div>
<div class="t" style="left:53.4px;top:377.8px;font-size:10.5px;color:#1e2a36;transform:scaleX(0.936);transform-origin:left;">Update Transfer</div>
<svg style="left:170px;top:380px" width="10" height="7"><path d="M1.2 1.2 L5 5 L8.8 1.2" fill="none" stroke="#000" stroke-width="2.3"/></svg>
<div class="r" style="left:11px;top:399px;width:191.5px;height:325px;background:linear-gradient(#ffffff,#f2f4f6 60%,#e7eaee);border:1px solid #b7c3cf;border-left:1.5px solid #8c99a6;border-top-color:#dde3ea"></div>
<div class="t" style="left:49.3px;top:411.3px;font-size:9.5px;color:#222;transform:scaleX(0.973);transform-origin:left;">Sync Transfer</div>
<div class="t" style="left:49.3px;top:447.3px;font-size:9.5px;color:#222;transform:scaleX(1.029);transform-origin:left;">Update Scanning</div>
<div class="t" style="left:49.3px;top:483.3px;font-size:9.5px;color:#222;transform:scaleX(1.037);transform-origin:left;">Mark As Shipped</div>
<div class="t" style="left:49.3px;top:519.3px;font-size:9.5px;color:#222;transform:scaleX(1.012);transform-origin:left;">Mark As Received</div>
<div class="t" style="left:49.3px;top:555.3px;font-size:9.5px;color:#222;transform:scaleX(1.032);transform-origin:left;">Mark As Not Received</div>
<div class="t" style="left:49.3px;top:591.3px;font-size:9.5px;color:#222;transform:scaleX(1.088);transform-origin:left;">Add Attachment</div>
<div class="t" style="left:49.3px;top:627.3px;font-size:9.5px;color:#222;transform:scaleX(1.062);transform-origin:left;">Add Product</div>
<div class="t" style="left:49.3px;top:663.3px;font-size:9.5px;color:#222;transform:scaleX(1.032);transform-origin:left;">Remove Product</div>
<div class="t" style="left:49.3px;top:699.3px;font-size:9.5px;color:#222;transform:scaleX(1.044);transform-origin:left;">Send Attachments</div>
<div class="r" style="left:2px;top:363px;width:206px;height:365px;border:5px solid #fe3f0f"></div>
</body></html>
